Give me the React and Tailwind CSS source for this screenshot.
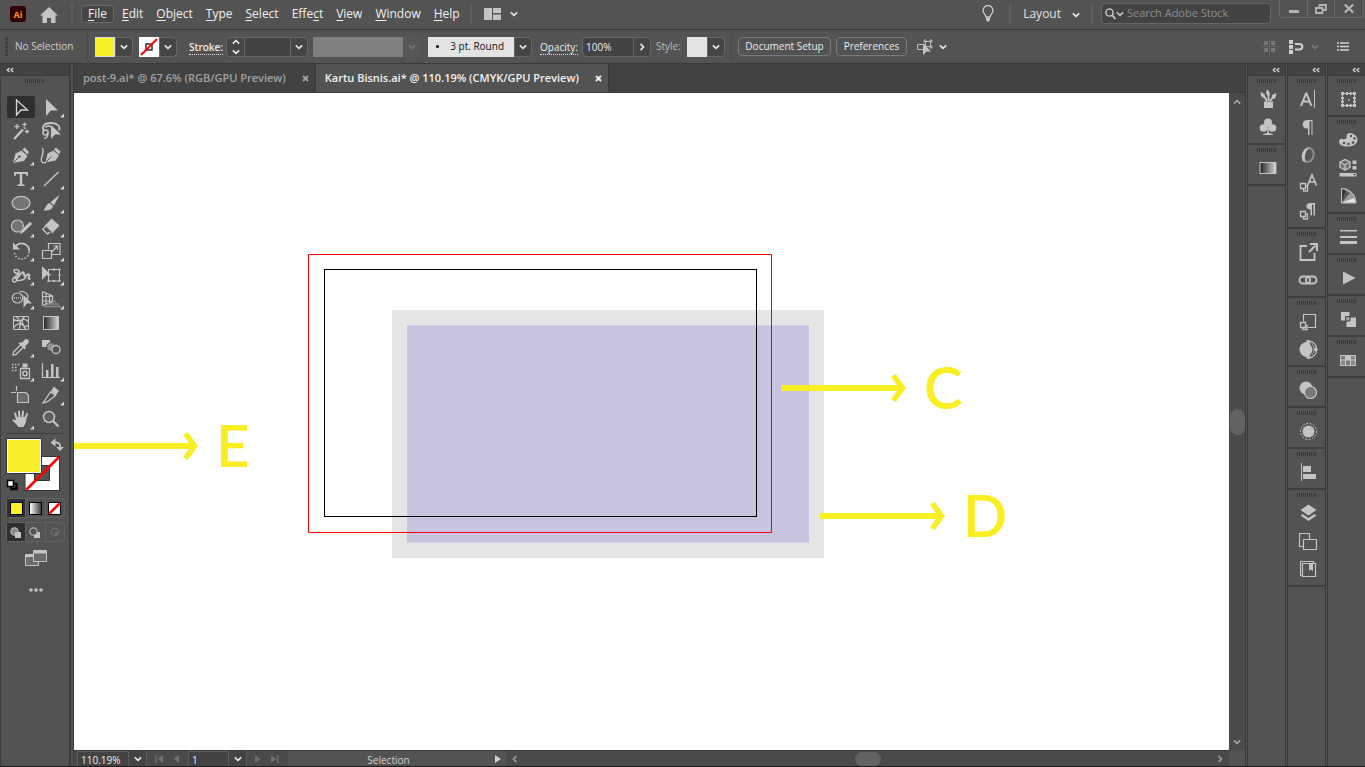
const MENUS = [
  ['', 'F', 'ile'],
  ['', 'E', 'dit'],
  ['', 'O', 'bject'],
  ['', 'T', 'ype'],
  ['', 'S', 'elect'],
  ['Effe', 'c', 't'],
  ['', 'V', 'iew'],
  ['', 'W', 'indow'],
  ['', 'H', 'elp'],
]

const TABS = [
  { title: 'post-9.ai* @ 67.6% (RGB/GPU Preview)', active: false },
  { title: 'Kartu Bisnis.ai* @ 110.19% (CMYK/GPU Preview)', active: true },
]

const C = '#c4c4c4'

// Every tool icon is drawn in a 30x24 cell
const TOOLS = [
  { name: 'Selection', icon: <path d="M10.5 5v15l4.5-5h6.500z" fill="none" stroke="#d6d6d6" strokeWidth="1.3" />, plain: true },
  { name: 'Direct Selection', icon: <path d="M10 4v17l5-5.500h7z" fill={C} /> },
  {
    name: 'Magic Wand',
    icon: (
      <>
        <path d="M8 20l9-9.500" stroke={C} strokeWidth="2.4" />
        <path d="M11 5v5M8.500 7.500h5M18.500 3.500v4M16.500 5.500h4M21 10.500v4M19 12.500h4" stroke={C} strokeWidth="1.3" />
        <path d="M18 9.500l1-1" stroke={C} strokeWidth="2" />
      </>
    ),
    plain: true,
  },
  {
    name: 'Lasso',
    icon: (
      <>
        <path d="M8 12c-3-5 1-8 7-8s10 3 8 7.500" fill="none" stroke={C} strokeWidth="1.8" />
        <circle cx="9.500" cy="13.500" r="2.500" fill="none" stroke={C} strokeWidth="1.6" />
        <path d="M12 14c0 3-1 5-4 5.500M9 8.500c2-2 5-2 6-.5" fill="none" stroke={C} strokeWidth="1.5" />
        <path d="M15 6v14l4-4.500h6z" fill={C} />
      </>
    ),
    plain: true,
  },
  {
    name: 'Pen',
    icon: (
      <>
        <path d="M7 20l2.500-9.500 6-3 6 5.500-3.500 5z" fill={C} />
        <path d="M16.500 6.500l2-2 4.500 4.500-1.500 2.500z" fill={C} />
        <path d="M7.500 19.500l5.500-5.500" stroke="#535353" />
        <circle cx="13.500" cy="13.500" r="1.200" fill="#535353" />
      </>
    ),
  },
  {
    name: 'Curvature',
    icon: (
      <>
        <path d="M9.500 19.500l2-9 6-3 5.500 5-3.500 5z" fill={C} />
        <path d="M18 6.500l2-2 4.500 4-1.500 3z" fill={C} />
        <path d="M6 5c4 3-3 11 0 14 1 1 3 1 4 0" fill="none" stroke={C} strokeWidth="1.4" />
        <path d="M10 19l5.500-5.500" stroke="#535353" />
      </>
    ),
    plain: true,
  },
  { name: 'Type', icon: <path d="M8 5h14v4h-1.500l-.5-2h-3.800v10.200l2.300.4V19h-7v-1.400l2.300-.4V7H10l-.5 2H8z" fill={C} /> },
  { name: 'Line Segment', icon: <path d="M8 19L22.500 5" stroke={C} strokeWidth="1.400" /> },
  { name: 'Ellipse', icon: <ellipse cx="15" cy="12" rx="9" ry="6.700" fill="#747474" stroke={C} strokeWidth="1.200" /> },
  {
    name: 'Paintbrush',
    icon: (
      <>
        <path d="M23.500 4L15 11.500l2.500 2.500z" fill={C} />
        <path d="M23.500 4l-5.500 10.200-3.500-3z" fill={C} />
        <path d="M13.500 12l3.500 3c-1 4-5 5-10 4.500 3-1.500 2.500-6.500 6.500-7.500z" fill={C} />
      </>
    ),
  },
  {
    name: 'Shaper',
    icon: (
      <>
        <circle cx="11.500" cy="11" r="6" fill="#747474" stroke={C} strokeWidth="1.200" />
        <path d="M13.500 19.500l1-4L24 6.500l2.500 2.500-9.500 9z" fill={C} stroke="#535353" strokeWidth=".6" />
      </>
    ),
  },
  {
    name: 'Eraser',
    icon: (
      <>
        <path d="M15.500 3.500l8 7-7.500 8-8-7z" fill={C} />
        <path d="M10.500 10.500L6.800 14.500l4.700 4.500 4.500-4" fill="none" stroke={C} strokeWidth="1.300" />
        <path d="M9.500 12l6 5.500" stroke="#535353" strokeWidth="1.200" />
      </>
    ),
  },
  {
    name: 'Rotate',
    icon: (
      <>
        <path d="M9.500 8a7.300 7.300 0 0 1 13.500 4.500" fill="none" stroke={C} strokeWidth="1.800" />
        <path d="M23 13a7.300 7.300 0 0 1-14.500 1" fill="none" stroke={C} strokeWidth="1.600" strokeDasharray="1.500 1.800" />
        <path d="M7 3.500v7h7z" fill={C} />
      </>
    ),
  },
  {
    name: 'Scale',
    icon: (
      <>
        <path d="M12.500 10.500v-6h11.500v11h-8M6.500 11.500h9v8h-9z" fill="none" stroke={C} strokeWidth="1.200" />
        <path d="M16 12.500l5-5M17.500 7h4v4" fill="none" stroke={C} strokeWidth="1.200" />
      </>
    ),
  },
  {
    name: 'Width',
    icon: (
      <>
        <path d="M7 17c2-5 7-5 6-9-1-2-5-2-5 0s3 3 5 1.500" fill="none" stroke={C} strokeWidth="1.700" />
        <path d="M9 17l4-4c3-4 5-5 5-2s1 3 3 1 3 0 2 2c-1 1-1 2 1.500 2" fill="none" stroke={C} strokeWidth="2" />
        <path d="M9 17c4 1 8 1 11-3" fill="none" stroke={C} strokeWidth="1.500" />
        <circle cx="8.500" cy="17" r="2" fill="#535353" stroke={C} strokeWidth="1.300" />
      </>
    ),
  },
  {
    name: 'Free Transform',
    icon: (
      <>
        <rect x="12.500" y="6.500" width="11" height="11.500" fill="none" stroke={C} />
        <path d="M6 3v14l4-4.500h5.500z" fill={C} />
        <path d="M11.500 17h2v2h-2zM22.500 5.500h2v2h-2zM22.500 17h2v2h-2zM17 5.500h2v2h-2zM17 17h2v2h-2zM22.500 11h2v2h-2z" fill={C} />
      </>
    ),
  },
  {
    name: 'Shape Builder',
    icon: (
      <>
        <ellipse cx="11.500" cy="11" rx="5.300" ry="5" fill="none" stroke={C} strokeWidth="1.200" />
        <path d="M13 5c6-2 11 3 8 7.500" fill="none" stroke={C} strokeWidth="1.200" />
        <path d="M8 11h10" stroke={C} strokeWidth="1.500" strokeDasharray="1 1" />
        <path d="M17.500 8v13l3.500-4.500h5z" fill={C} />
      </>
    ),
  },
  {
    name: 'Perspective Grid',
    icon: (
      <>
        <path d="M6.500 4.500v14M6.500 4.500l10 4.500v6l-10 3.500M10 6v11.500M13.500 7.500v8.500M6.500 9.500h10M6.500 14h10" fill="none" stroke={C} strokeWidth="1.200" />
        <path d="M16 14.500h4M12 17h11M8 19.500h17" stroke="#8c8c8c" strokeWidth="1.300" />
      </>
    ),
  },
  {
    name: 'Mesh',
    icon: (
      <>
        <path d="M7.500 5.500h15v13h-15z" fill="none" stroke={C} />
        <path d="M7.500 9c3 0 6 2 8 0s4-1 7 2M7.500 17c3-5 7-5 9-3s4 2 6 0M10 5.500c5 3 5 8 3 13M18.500 5.500c-5 4-1 9 1 13" fill="none" stroke={C} strokeWidth="1.400" />
      </>
    ),
    plain: true,
  },
  { name: 'Gradient', icon: <rect x="7.500" y="5.500" width="15" height="13" fill="url(#gray-ramp)" stroke={C} />, plain: true },
  {
    name: 'Eyedropper',
    icon: (
      <>
        <path d="M14 10.500l-6.500 6.500-.5 3 3-.5 6.500-6.500" fill="none" stroke={C} strokeWidth="1.400" />
        <path d="M12.500 8.500l1.500-1.500 1.500 1 3.500-3.500c2-1.500 5 1.500 3.500 3.500L19 11.500l1 1.500-1.500 1.500z" fill={C} />
      </>
    ),
  },
  {
    name: 'Blend',
    icon: (
      <>
        <path d="M6 5h8v7H6z" fill={C} />
        <circle cx="15" cy="12" r="4.300" fill="#909090" stroke="#535353" />
        <circle cx="20" cy="14.500" r="4" fill="#535353" stroke={C} strokeWidth="1.300" />
      </>
    ),
    plain: true,
  },
  {
    name: 'Symbol Sprayer',
    icon: (
      <>
        <path d="M14.500 9.500h9v10h-9z" fill="none" stroke={C} strokeWidth="1.300" />
        <path d="M16.500 4.500h5v4h-5z" fill={C} />
        <circle cx="19" cy="14.500" r="2.200" fill="none" stroke={C} strokeWidth="1.500" />
        <path d="M6 5.500h8M6 8.500h6M6 11.500h5" stroke={C} strokeWidth="1.500" strokeDasharray="1.500 1.500" />
      </>
    ),
  },
  {
    name: 'Column Graph',
    icon: (
      <>
        <path d="M6.500 4v14.500H24" fill="none" stroke={C} strokeWidth="1.200" />
        <path d="M10 11h2.500v7H10zM15 5h2.500v13H15zM20 8h2.500v10H20z" fill={C} />
      </>
    ),
  },
  {
    name: 'Artboard',
    icon: (
      <>
        <path d="M11.500 9.500h8.500l2.500 3v7H11.500z" fill="#6a6a6a" stroke={C} strokeWidth="1.200" />
        <path d="M10.500 3v5M5 9.500h5" stroke={C} strokeWidth="1.200" />
      </>
    ),
    plain: true,
  },
  {
    name: 'Slice',
    icon: (
      <>
        <path d="M7 20l7.500-11 5 3.500L11 19z" fill="none" stroke={C} strokeWidth="1.300" />
        <path d="M15 8l3-4.500 5 4.500-3.500 4.500z" fill={C} />
      </>
    ),
  },
  {
    name: 'Hand',
    icon: (
      <>
        <path d="M10.500 11L9 6.500M13.500 10l-.5-5.500M16.500 10l.5-5.500M19.500 11l1.500-4" stroke={C} strokeWidth="2" strokeLinecap="round" />
        <path d="M9.500 10h11l-.5 5-2.500 5h-5l-2.500-3-3.500-3.500c0-1.500 2-1.500 3.500 0z" fill={C} />
      </>
    ),
  },
  {
    name: 'Zoom',
    icon: (
      <>
        <circle cx="13" cy="10" r="5.500" fill="#606060" stroke={C} strokeWidth="1.500" />
        <path d="M17 14l5.500 5.500" stroke={C} strokeWidth="2.400" />
      </>
    ),
    plain: true,
  },
]

// Dock icons use a 20x20 box
const DI = {
  brushes: (
    <>
      <path d="M6 12.500h9V19H6z" fill={C} />
      <path d="M9 12L5.500 6M10.500 12V4M12 12l4-5" stroke={C} strokeWidth="1.800" />
      <path d="M9 0l3 4-1.500 4L8 4.500zM2.500 3l4 2 .5 5-4-3zM18.500 4l-1 5-4 1.500L14 6z" fill={C} />
    </>
  ),
  club: (
    <>
      <circle cx="10" cy="5.500" r="4" fill={C} />
      <circle cx="5.500" cy="11" r="3.800" fill={C} />
      <circle cx="14.500" cy="11" r="3.800" fill={C} />
      <path d="M9.200 8h1.600v8l4 1v1H5.200v-1l4-1z" fill={C} />
    </>
  ),
  gradient: <rect x="2" y="4.500" width="16" height="11" fill="url(#gray-ramp)" stroke={C} />,
  character: (
    <>
      <path d="M3 17L8 4.500h.500L13.500 17M5 12.500h6.500" fill="none" stroke={C} strokeWidth="2" />
      <path d="M16.500 1v18" stroke={C} />
    </>
  ),
  paragraph: (
    <path d="M14.500 3v15h-1V4.200h-2V18h-1.500v-6.500c-7 1-7-8.500-.5-8.500z" fill={C} />
  ),
  opentype: (
    <>
      <ellipse cx="10.500" cy="10" rx="5" ry="7" transform="rotate(14 10.500 10)" fill="none" stroke="#8e8e8e" strokeWidth="2" />
      <path d="M11.500 2.500C5.500 2.500 3 9 4 14c.5 2 2 3.500 4 3.500-3-3-.5-12.500 3.500-15z" fill={C} />
    </>
  ),
  charStyles: (
    <>
      <path d="M9.500 12.500L14 2l4.500 10.500M11 9h6" fill="none" stroke={C} strokeWidth="1.700" />
      <path d="M2.500 10.500h5v5h-5zM5.500 15.500v2.500h4v-5h-2" fill="none" stroke={C} strokeWidth="1.300" />
    </>
  ),
  parStyles: (
    <>
      <path d="M17 2v12.500h-1.500V3.500h-1.500v11h-1.500V8.500c-5.500 0-5.500-6.500 0-6.500z" fill={C} />
      <path d="M2.500 10.500h5v5h-5zM5.500 15.500v2.500h4v-5h-2" fill="none" stroke={C} strokeWidth="1.300" />
    </>
  ),
  exportIcon: (
    <>
      <path d="M9 4H2.500v14h14v-7" fill="none" stroke={C} strokeWidth="1.800" />
      <path d="M11 10l6.500-6.500M12 2h7v7" fill="none" stroke={C} strokeWidth="2" />
    </>
  ),
  links: (
    <>
      <rect x="1.500" y="6.500" width="10.500" height="7" rx="3.500" fill="none" stroke={C} strokeWidth="1.900" />
      <rect x="8" y="6.500" width="10.500" height="7" rx="3.500" fill="none" stroke={C} strokeWidth="1.900" />
    </>
  ),
  transform: (
    <>
      <path d="M5.500 10V3.500h12v13H10" fill="none" stroke={C} strokeWidth="1.200" />
      <path d="M2.500 11.500h5v5h-5zM5 16.500v2h4v-4H7.500" fill="none" stroke={C} strokeWidth="1.300" />
    </>
  ),
  recolor: (
    <>
      <circle cx="9" cy="10.500" r="7.500" fill={C} />
      <path d="M10.500 2c5 .5 8 4 8 8.500s-3 8-8 8.500" fill="none" stroke={C} strokeWidth="1.300" />
      <path d="M12 4.500c4 3 4 9 0 12" fill="none" stroke="#535353" strokeWidth="1.200" />
      <circle cx="10" cy="2.500" r="1.700" fill={C} />
      <circle cx="10" cy="18.500" r="1.500" fill={C} />
      <circle cx="18" cy="10.500" r="1.700" fill={C} />
    </>
  ),
  transparency: (
    <>
      <circle cx="8" cy="8" r="6.500" fill={C} />
      <circle cx="12.500" cy="12.500" r="6" fill="#777" stroke={C} strokeWidth="1.200" />
    </>
  ),
  appearance: (
    <>
      <circle cx="10.500" cy="10.500" r="6" fill={C} />
      <circle cx="10.500" cy="10.500" r="8" fill="none" stroke={C} strokeDasharray="2 1.500" />
    </>
  ),
  align: <path d="M3 1h1v18H3zM5 4h8v6H5zM5 12h13v5H5z" fill={C} />,
  layers: (
    <path d="M10.500 1.500l8 5.500-8 5.500L2.500 7zM2.500 12.500l2-1.500 6 4 6-4 2 1.500-8 5.500z" fill={C} />
  ),
  asset: <path d="M5.500 15.500h-4v-13h10v6M5.500 8.500h13v10h-13z" fill="none" stroke={C} strokeWidth="1.200" />,
  library: (
    <>
      <path d="M4 16.500H2.500v-14h13V4M4.500 4.500h13v13h-13z" fill="none" stroke={C} strokeWidth="1.200" />
      <path d="M11 5h4v7l-2-1.500-2 1.500z" fill={C} />
    </>
  ),
  artboards: (
    <>
      <path d="M4.500 4.500h12v12h-12z" fill="none" stroke={C} />
      <path d="M3 3h3v3H3zM8 3h2v3H8zM11.500 3h2v3h-2zM15 3h3v3h-3zM3 15h3v3H3zM15 15h3v3h-3zM8 15h2v3H8zM11.500 15h2v3h-2zM3 8h3v2H3zM3 11.500h3v2H3zM15 8h3v2h-3zM15 11.500h3v2h-3zM10 10h1.500v1.500H10z" fill={C} />
    </>
  ),
  palette: (
    <>
      <path d="M12 3c4 .5 7.500 3 7.500 7 0 4-4.500 6.500-10 6.500-5 0-8.500-1.500-8.500-5 0-2 2-3.500 4-2.500 2 1 4-.5 3.500-2-.5-2 1-4 3.500-4z" fill={C} />
      <circle cx="6" cy="13" r="1.300" fill="#535353" />
      <circle cx="10.500" cy="14" r="1.300" fill="#535353" />
      <circle cx="15" cy="12.500" r="1.300" fill="#535353" />
      <circle cx="16.500" cy="8.500" r="1.200" fill="#535353" />
      <circle cx="13" cy="6" r="1.200" fill="#535353" />
    </>
  ),
  cube: (
    <>
      <path d="M2 4l5-2.500L12 4v5.500L7 12l-5-2.500zM2 4l5 2.500L12 4M7 6.500V12" fill="#777" stroke={C} strokeWidth="1.200" />
      <path d="M14.500 2.500h4v3.500h-4zM14.500 8h4v3.500h-4zM1.500 15h17v3.500h-17z" fill={C} />
      <path d="M15 16h3l-1.500 1.500z" fill="#333" />
    </>
  ),
  guide: (
    <>
      <path d="M3.500 2.500v14.500h14.500c0-8-6-14.500-14.500-14.500z" fill="#999" stroke={C} />
      <path d="M4 16.500V3l4 1.500z" fill="#333" />
      <path d="M4 16.500L8 4.500l3.500 2.500z" fill="#555" />
      <path d="M4 16.500L16 12l1.500 4.500z" fill="#e2e2e2" />
    </>
  ),
  stroke: <path d="M2 3h17v1.500H2zM2 9h17v2H2zM2 14h17v3H2z" fill={C} />,
  play: <path d="M5 3.500v13L17.500 10z" fill={C} />,
  pathfinder: (
    <>
      <path d="M3 3h8.500v8.500H3zM8.500 8.500H18V18H8.500z" fill={C} />
      <path d="M7.500 7.500h4.500v4.500H7.500z" fill="#a0a0a0" stroke="#444" />
    </>
  ),
  swatches: (
    <>
      <path d="M2 5h16v11H2z" fill={C} />
      <path d="M3 6h4v3.500H3zM8 10.500h4V15H8z" fill="#7a7a7a" />
      <path d="M13 6h4v3.500h-4zM3 10.500h4V15H3zM13 10.500h4V15h-4z" fill="#8a8a8a" />
    </>
  ),
}

const DOCKS = [
  [['brushes', 'club'], ['gradient']],
  [
    ['character', 'paragraph', 'opentype', 'charStyles', 'parStyles'],
    ['exportIcon', 'links'],
    ['transform', 'recolor'],
    ['transparency'],
    ['appearance'],
    ['align'],
    ['layers', 'asset', 'library'],
  ],
  [['artboards'], ['palette', 'cube', 'guide'], ['stroke'], ['play'], ['pathfinder'], ['swatches']],
]

function Chevron({ dir = 'down', className = 'text-[#e6e6e6]' }) {
  const d = {
    down: 'M1.800 3.300l3.200 3L8.200 3.300',
    up: 'M1.800 6.700L5 3.700l3.200 3',
    left: 'M6.500 1.800L3.500 5l3 3.200',
    right: 'M3.500 1.800L6.500 5l-3 3.200',
  }[dir]
  return (
    <svg width="10" height="10" viewBox="0 0 10 10" className={`shrink-0 ${className}`} aria-hidden="true">
      <path d={d} fill="none" stroke="currentColor" strokeWidth="1.700" />
    </svg>
  )
}

function DropButton({ label, dir }) {
  return (
    <button
      type="button"
      aria-label={label}
      className="flex h-5 w-[18px] items-center justify-center rounded-r-sm border border-[#666] bg-[#454545]"
    >
      <Chevron dir={dir} />
    </button>
  )
}

function Grip() {
  return (
    <svg width="20" height="4" className="mx-auto block" aria-hidden="true">
      <path d="M0 2h20" stroke="#383838" strokeWidth="4" strokeDasharray="1 1" />
    </svg>
  )
}

function Collapse() {
  return (
    <svg width="8" height="6" viewBox="0 0 8 6" aria-hidden="true">
      <path d="M3.500 1L1.300 3l2.200 2M7.200 1L5 3l2.200 2" fill="none" stroke="#d4d4d4" strokeWidth="1.400" />
    </svg>
  )
}

function Divider({ className }) {
  return <span className={`w-[2px] shrink-0 bg-[#5e5e5e] ${className}`} />
}

function MenuBar() {
  return (
    <header className="flex h-[30px] shrink-0 items-start justify-between border-b border-[#3a3a3a]">
      <div className="flex h-[27px] items-center">
        <svg width="16" height="16" viewBox="0 0 16 16" className="ml-[10px]" aria-hidden="true">
          <rect width="16" height="16" rx="3" fill="#330000" />
          <text x="8" y="11.500" textAnchor="middle" fill="#ff9a00" fontSize="9" fontWeight="700" fontFamily="Open Sans, sans-serif">
            Ai
          </text>
        </svg>
        <button type="button" aria-label="Home" className="ml-[14px]">
          <svg width="18" height="16" viewBox="0 0 18 16" className="mt-[2px] block">
            <path d="M9 0l9 8.500h-2.500V16H11v-5H7v5H2.500V8.500H0z" fill="#c4c4c4" />
          </svg>
        </button>
        <Divider className="ml-[13px] h-5" />
        <nav className="ml-2 flex items-center text-xs text-[#f0f0f0]">
          {MENUS.map(([pre, key, post], i) => (
            <button
              key={pre + key + post}
              type="button"
              className={
                i === 0
                  ? 'mr-px h-[18px] rounded-sm border border-[#6a6a6a] bg-[#454545] px-[6px] leading-4'
                  : 'h-[18px] pr-[6px] pl-[7px] leading-4'
              }
            >
              {pre}
              <span className="underline underline-offset-2">{key}</span>
              {post}
            </button>
          ))}
        </nav>
        <Divider className="ml-1 h-5" />
        <button type="button" aria-label="Arrange documents" className="ml-3 flex items-center gap-[7px]">
          <svg width="18" height="12" viewBox="0 0 18 12">
            <path d="M0 0h8v12H0zM9 0h8v5H9zM9 6.500h8V12H9z" fill="#c4c4c4" />
          </svg>
          <Chevron />
        </button>
      </div>

      <div className="flex items-start">
        <div className="flex h-[27px] items-center">
          <button type="button" aria-label="Learn">
            <svg width="12" height="17" viewBox="0 0 12 17" className="block">
              <path d="M4 12c0-2.500-3-3.500-3-6.500a5 5 0 0 1 10 0c0 3-3 4-3 6.500z" fill="none" stroke="#c9c9c9" strokeWidth="1.300" />
              <path d="M4 12.500h4v2L7 16.500H5l-1-2z" fill="#c9c9c9" />
            </svg>
          </button>
          <Divider className="ml-[15px] h-5" />
          <button type="button" className="ml-3 flex items-center gap-[10px] text-xs text-[#e2e2e2]">
            Layout
            <Chevron className="mt-[2px] text-[#e6e6e6]" />
          </button>
          <Divider className="ml-[10px] h-5" />
          <label className="ml-2 flex h-[21px] w-[170px] items-center rounded-sm border border-[#666] bg-[#434343] pl-[3px]">
            <svg width="11" height="12" viewBox="0 0 11 12" aria-hidden="true">
              <circle cx="4.500" cy="4.500" r="3.600" fill="none" stroke="#d0d0d0" strokeWidth="1.400" />
              <path d="M7 7l3.500 4" stroke="#d0d0d0" strokeWidth="1.800" />
            </svg>
            <Chevron className="-ml-px text-[#c4c4c4]" />
            <input
              aria-label="Search Adobe Stock"
              placeholder="Search Adobe Stock"
              className="min-w-0 flex-1 pl-[2px] text-[11px] outline-none placeholder:text-[#8c8c8c]"
            />
          </label>
        </div>
        <div className="mr-px ml-2 flex h-[18px] rounded-b-sm border border-t-0 border-[#6a6a6a]">
          <button type="button" aria-label="Minimize" className="flex w-[27px] justify-center pt-[10px]">
            <span className="h-[3px] w-[10px] bg-[#b4b4b4]" />
          </button>
          <button type="button" aria-label="Restore" className="flex w-7 justify-center border-x border-[#6a6a6a] pt-1">
            <svg width="12" height="10" viewBox="0 0 12 10">
              <path d="M4.500 3V1h6.500v5H8.500M1 4h6.500v5H1z" fill="none" stroke="#b4b4b4" strokeWidth="1.800" />
            </svg>
          </button>
          <button type="button" aria-label="Close" className="flex w-7 justify-center pt-1">
            <svg width="10" height="9" viewBox="0 0 10 9">
              <path d="M.8 .5l8.400 8M9.200 .5L.8 8.500" stroke="#b4b4b4" strokeWidth="2.200" />
            </svg>
          </button>
        </div>
      </div>
    </header>
  )
}

function ControlBar() {
  return (
    <div className="flex h-[34px] shrink-0 items-center border-b border-[#3a3a3a] text-[10px] font-medium text-[#ededed]">
      <svg width="3" height="20" className="ml-[5px]" aria-hidden="true">
        <path d="M1.500 0v20" stroke="#383838" strokeWidth="3" strokeDasharray="1 1" />
      </svg>
      <span className="ml-[7px] w-[72px] text-[#cfcfcf]">No Selection</span>
      <span className="h-[26px] w-px bg-[#484848]" />
      <button type="button" aria-label="Fill" className="ml-[7px] h-5 w-5 border border-[#ddd] bg-[#faf02a]" />
      <DropButton label="Fill options" />
      <button type="button" aria-label="Stroke color" className="ml-[6px] h-5 w-5 bg-white">
        <svg width="20" height="20" viewBox="0 0 20 20">
          <rect x="7" y="7" width="6" height="6" fill="none" stroke="#222" strokeWidth="1.400" />
          <path d="M2 18L18 2" stroke="#f00" strokeWidth="2" />
        </svg>
      </button>
      <DropButton label="Stroke color options" />
      <label htmlFor="weight" className="ml-3 w-8 shrink-0 leading-3">
        <span className="border-b border-dotted border-[#ddd] font-semibold">Stroke:</span>
      </label>
      <button
        type="button"
        aria-label="Step"
        className="ml-[5px] flex h-5 w-[19px] flex-col items-center justify-center rounded-l-sm border border-[#666] bg-[#454545]"
      >
        <Chevron dir="up" />
        <Chevron />
      </button>
      <input id="weight" className="h-5 w-[45px] border-y border-[#666] bg-[#434343]" />
      <DropButton label="Weight options" />
      <span className="ml-[5px] h-5 w-[90px] shrink-0 bg-[#808080]" />
      <span className="flex h-5 w-[18px] shrink-0 items-center justify-center bg-[#575757]">
        <Chevron className="text-[#737373]" />
      </span>
      <button
        type="button"
        className="ml-[7px] flex h-5 w-[86px] shrink-0 items-center justify-between bg-[#e3e3e3] pr-[10px] pl-2 text-[#111]"
      >
        <span className="h-[3px] w-[3px] rounded-full bg-black" />
        3 pt. Round
      </button>
      <DropButton label="Brush options" />
      <label htmlFor="opacity" className="ml-2 w-[37px] shrink-0 leading-3">
        <span className="border-b border-dotted border-[#ddd]">Opacity:</span>
      </label>
      <input id="opacity" defaultValue="100%" className="ml-[5px] h-5 w-[51px] rounded-l-sm border border-r-0 border-[#666] bg-[#434343] pl-[3px]" />
      <DropButton label="Opacity slider" dir="right" />
      <span className="ml-[5px] w-[31px] text-[#bdbdbd]">Style:</span>
      <button type="button" aria-label="Graphic style" className="h-5 w-5 bg-[#e3e3e3]" />
      <DropButton label="Style options" />
      <span className="ml-[6px] h-[26px] w-px bg-[#484848]" />
      <button type="button" className="ml-[6px] h-[19px] w-[93px] shrink-0 rounded-sm border border-[#7a7a7a]">
        Document Setup
      </button>
      <button type="button" className="ml-[5px] h-[19px] w-[71px] shrink-0 rounded-sm border border-[#7a7a7a]">
        Preferences
      </button>
      <button type="button" aria-label="Select similar" className="ml-[9px] flex shrink-0 items-center gap-[5px]">
        <svg width="17" height="16" viewBox="0 0 17 16">
          <path d="M9.500 2.500h5v5h-5zM7 5.500H1.500v5H7M8 1h2v2H8zM14 1h2v2h-2zM14 7h2v2h-2z" fill="none" stroke="#bbb" />
          <path d="M7 4v12l3.500-3.500H15z" fill="#c4c4c4" />
        </svg>
        <Chevron />
      </button>
      <div className="ml-auto flex items-center pr-4">
        <svg width="15" height="14" viewBox="0 0 15 14" aria-hidden="true">
          <path d="M2 1h4v4H2zM9 1h4v4H9zM2 8h4v4H2zM9 8h4v4H9z" fill="#777" />
          <path d="M7.500 0v14M0 6.500h15" stroke="#666" />
        </svg>
        <svg width="15" height="14" viewBox="0 0 15 14" className="ml-3" aria-hidden="true">
          <path d="M0 0h4v4H0zM0 5h4v4H0zM0 10h4v4H0z" fill="#cfcfcf" />
          <path d="M6 4h4c4.500 0 4.500 5.500 0 5.500H6" fill="none" stroke="#cfcfcf" strokeWidth="2" />
        </svg>
        <Chevron className="ml-[6px] text-[#7a7a7a]" />
        <button type="button" aria-label="Panel menu" className="ml-[17px]">
          <svg width="12" height="9" viewBox="0 0 12 9">
            <path d="M0 1h2M3 1h9M0 4.500h2M3 4.500h9M0 8h2M3 8h9" stroke="#d4d4d4" strokeWidth="1.300" />
          </svg>
        </button>
      </div>
    </div>
  )
}

function ColorControls() {
  const cell = 'flex h-[18px] flex-1 items-center justify-center'
  return (
    <div className="mx-[5px] border-t border-[#424242]">
      <svg width="60" height="56" viewBox="0 0 60 56" className="mt-1 block" aria-hidden="true">
        <path d="M19 18.500h34.500v34H19z" fill="#fff" stroke="#333" />
        <path d="M28.500 27.500h15v15h-15z" fill="#535353" stroke="#333" />
        <path d="M20 52L53 19" stroke="#f00" strokeWidth="2.500" />
        <path d="M.5 .5h35v35H.5z" fill="#faf02a" stroke="#333" />
        <path d="M1.500 1.500h33v33h-33z" fill="none" stroke="#fff" />
        <path d="M48 4.500c5-.5 6.500 1 6 5.500" fill="none" stroke="#c4c4c4" strokeWidth="1.800" />
        <path d="M44.500 4.500l5-4v8zM50 9h8l-4 4z" fill="#c4c4c4" />
        <path d="M5.500 46h5v5h-5z" fill="#535353" stroke="#000" strokeWidth="2.500" />
        <path d="M1.500 42.500h6v6h-6z" fill="#fff" stroke="#000" strokeWidth="1.500" />
      </svg>
      <div className="mt-1 flex w-[59px] rounded-sm border border-[#626262]">
        <button type="button" aria-label="Color" className={`${cell} bg-[#2f2f2f]`}>
          <span className="h-[13px] w-[13px] border border-black bg-[#faf02a]" />
        </button>
        <button type="button" aria-label="Gradient fill" className={`${cell} border-x border-[#626262]`}>
          <span className="h-[13px] w-[13px] border border-black bg-linear-to-r from-white to-[#444]" />
        </button>
        <button type="button" aria-label="None" className={cell}>
          <svg width="13" height="13" viewBox="0 0 13 13">
            <path d="M.5 .5h12v12H.5z" fill="#fff" stroke="#000" />
            <path d="M1.500 11.500l10-10" stroke="#f00" strokeWidth="2.500" />
          </svg>
        </button>
      </div>
      <div className="mt-1 flex w-[59px] rounded-sm border border-[#626262]">
        <button type="button" aria-label="Draw normal" className={`${cell} bg-[#2f2f2f]`}>
          <DrawMode />
        </button>
        <button type="button" aria-label="Draw behind" className={`${cell} border-x border-[#626262]`}>
          <DrawMode behind />
        </button>
        <button type="button" aria-label="Draw inside" className={cell}>
          <svg width="10" height="10" viewBox="0 0 10 10">
            <circle cx="5" cy="5" r="3.800" fill="none" stroke="#6e6e6e" strokeWidth="1.200" />
            <path d="M5 5h3v2L6 8.500H5z" fill="#6e6e6e" />
          </svg>
        </button>
      </div>
      <button type="button" aria-label="Screen mode" className="mt-2 ml-[19px] block">
        <svg width="22" height="16" viewBox="0 0 22 16">
          <path d="M.5 4.500h13v11H.5z" fill="#6c6c6c" stroke="#c4c4c4" />
          <path d="M.5 4h13v3H.5z" fill="#c4c4c4" />
          <path d="M8.500 .5h13v11h-13z" fill="#6c6c6c" stroke="#c4c4c4" />
          <path d="M8.500 .5h13v3h-13z" fill="#c4c4c4" />
        </svg>
      </button>
      <button type="button" aria-label="Edit toolbar" className="mt-[22px] ml-[23px] block">
        <svg width="14" height="4" viewBox="0 0 14 4">
          <path d="M2 2h.01M7 2h.01M12 2h.01" stroke="#c4c4c4" strokeWidth="3.600" strokeLinecap="round" />
        </svg>
      </button>
    </div>
  )
}

function DrawMode({ behind }) {
  return (
    <svg width="12" height="11" viewBox="0 0 12 11">
      {behind && <path d="M5 5h6v6H5z" fill="#c4c4c4" />}
      <circle cx="4.500" cy="4.500" r="3.700" fill={behind ? '#535353' : '#888'} stroke="#b4b4b4" strokeWidth="1.200" />
      {!behind && <path d="M5 5h6v6H5z" fill="#c4c4c4" />}
    </svg>
  )
}

function Toolbar() {
  return (
    <aside className="mr-[2px] flex w-[71px] shrink-0 flex-col border-r-2 border-l border-[#3d3d3d]">
      <button type="button" aria-label="Collapse tools" className="flex h-3 items-center border-b border-[#3a3a3a] bg-[#424242] pl-[5px]">
        <Collapse />
      </button>
      <div className="pt-[3px]">
        <Grip />
      </div>
      <div className="mt-3 ml-[5px] grid w-[60px] grid-cols-2">
        {TOOLS.map((tool, i) => (
          <button key={tool.name} type="button" aria-label={tool.name} className="flex h-6 items-center justify-center">
            <svg width="30" height="24" viewBox="0 0 30 24">
              {i === 0 && <rect x="1" y="1" width="28" height="22" rx="2" fill="#2f2f2f" />}
              {tool.icon}
              {!tool.plain && <path d="M28 18.500v4h-4z" fill="#d4d4d4" />}
            </svg>
          </button>
        ))}
      </div>
      <div className="h-[2px]" />
      <ColorControls />
    </aside>
  )
}

function Tabs() {
  return (
    <div role="tablist" className="flex h-[29px] shrink-0 border-b border-[#3a3a3a] bg-[#424242] text-[11px] font-semibold">
      {TABS.map((tab) => (
        <div
          key={tab.title}
          className={
            tab.active
              ? 'flex items-center border-r border-[#3a3a3a] bg-[#535353] text-[#f2f2f2]'
              : 'flex items-center border-r border-[#3a3a3a] text-[#a2a2a2]'
          }
        >
          <button type="button" role="tab" aria-selected={tab.active} className="pl-[9px] whitespace-nowrap">
            {tab.title}
          </button>
          <button type="button" aria-label="Close tab" className="mr-[6px] ml-4">
            <svg width="7" height="7" viewBox="0 0 7 7">
              <path d="M1 1l5 5M6 1L1 6" stroke="currentColor" strokeWidth="1.800" />
            </svg>
          </button>
        </div>
      ))}
    </div>
  )
}

function Arrow({ x, y, label }) {
  return (
    <g transform={`translate(${x} ${y})`}>
      <path d="M0 0h121" stroke="#f8ee22" strokeWidth="6" />
      <path d="M112.500 -12.500L121.500 0l-9 12.500" fill="none" stroke="#f8ee22" strokeWidth="5.500" />
      <text x="143" y="21" fill="#f8ee22" fontSize="58" fontWeight="600" fontFamily="Lato, sans-serif">
        {label}
      </text>
    </g>
  )
}

function Artboard() {
  return (
    <svg className="block h-full w-full bg-white">
      <rect x="318" y="217" width="432" height="248" fill="#e4e6e5" />
      <rect x="333" y="232.500" width="402" height="217" fill="#c8c4e0" />
      <path d="M697.500 161.500h-463v278h463z" fill="none" stroke="#f00" />
      <rect x="250.500" y="176.500" width="432" height="247" fill="none" stroke="#000" />
      <Arrow x={707} y={295} label="C" />
      <Arrow x={746} y={423} label="D" />
      <Arrow x={-1} y={353} label="E" />
    </svg>
  )
}

function StatusBar() {
  return (
    <div className="flex h-[15px] shrink-0 items-center bg-[#4a4a4a] text-[10px] font-medium text-[#ededed]">
      <input aria-label="Zoom level" defaultValue="110.19%" className="ml-[3px] h-full w-[52px] border border-b-0 border-[#5c5c5c] bg-[#434343] pt-px pl-[3px]" />
      <button type="button" aria-label="Zoom presets" className="flex h-full w-[18px] items-center justify-center border-r border-[#5c5c5c] bg-[#434343]">
        <Chevron />
      </button>
      <svg width="26" height="8" viewBox="0 0 26 8" className="ml-[7px]" aria-hidden="true">
        <path d="M1 0h1.500v8H1zM9 0v8L3.500 4zM25 0v8l-5.500-4z" fill="#6e6e6e" />
      </svg>
      <input aria-label="Artboard number" defaultValue="1" className="ml-2 h-full w-[41px] border border-b-0 border-[#5c5c5c] bg-[#434343] pt-px pl-[3px]" />
      <button type="button" aria-label="Artboard list" className="flex h-full w-[18px] items-center justify-center border-r border-[#5c5c5c] bg-[#434343]">
        <Chevron />
      </button>
      <svg width="26" height="8" viewBox="0 0 26 8" className="ml-[7px]" aria-hidden="true">
        <path d="M1 0l5.500 4L1 8zM17 0l5.500 4L17 8zM23 0h1.500v8H23z" fill="#6e6e6e" />
      </svg>
      <span className="ml-2 h-full w-[201px] shrink-0 bg-[#535353] text-center leading-[18px] text-[#cfcfcf]">Selection</span>
      <button type="button" aria-label="Status menu" className="flex h-full w-[17px] items-center justify-center bg-[#535353]">
        <svg width="6" height="8" viewBox="0 0 6 8">
          <path d="M0 0l6 4-6 4z" fill="#cfcfcf" />
        </svg>
      </button>
      <div className="flex flex-1 items-center justify-between px-1">
        <Chevron dir="left" className="text-[#9a9a9a]" />
        <span className="h-[14px] w-[26px] rounded-full bg-[#636363]" />
        <Chevron dir="right" className="text-[#9a9a9a]" />
      </div>
    </div>
  )
}

function DocumentWindow() {
  return (
    <section className="flex min-w-0 flex-1 flex-col border-l border-[#3a3a3a]">
      <Tabs />
      <div className="flex min-h-0 flex-1">
        <div className="flex min-w-0 flex-1 flex-col">
          <main className="min-h-0 flex-1 border-b border-[#3a3a3a]">
            <Artboard />
          </main>
          <StatusBar />
        </div>
        <div className="flex w-4 shrink-0 flex-col bg-[#4a4a4a]">
          <div className="flex flex-1 flex-col items-center justify-between pt-1 pb-[3px]">
            <Chevron dir="up" className="text-[#a4a4a4]" />
            <span className="h-[26px] w-[15px] rounded-full bg-[#636363]" />
            <Chevron className="text-[#a4a4a4]" />
          </div>
          <div className="h-4 bg-[#535353]" />
        </div>
      </div>
    </section>
  )
}

function Dock({ sections }) {
  return (
    <aside className="flex w-10 shrink-0 flex-col border-l border-[#3a3a3a] pl-px">
      <div className="flex flex-1 flex-col border-l border-[#3a3a3a]">
        <button type="button" aria-label="Expand panels" className="flex h-3 items-center justify-end border-b border-[#3a3a3a] bg-[#424242] pr-[5px]">
          <Collapse />
        </button>
        {sections.map((icons) => (
          <div key={icons[0]} className="border-b-2 border-[#3e3e3e] pt-[3px] pb-[2px]">
            <Grip />
            <div className="mt-[2px]">
              {icons.map((name) => (
                <button key={name} type="button" aria-label={name} className="flex h-7 w-full items-center justify-center pl-[2px]">
                  <svg width="20" height="20" viewBox="0 0 20 20">
                    {DI[name]}
                  </svg>
                </button>
              ))}
            </div>
          </div>
        ))}
      </div>
    </aside>
  )
}

export default function App() {
  return (
    <div className="flex h-screen flex-col overflow-hidden border-b border-[#1c1c1c] bg-[#535353] font-['Open_Sans','Noto_Sans',sans-serif]">
      <svg width="0" height="0" className="absolute" aria-hidden="true">
        <linearGradient id="gray-ramp">
          <stop offset="0" stopColor="#222" />
          <stop offset="1" stopColor="#d8d8d8" />
        </linearGradient>
      </svg>
      <MenuBar />
      <ControlBar />
      <div className="flex min-h-0 flex-1">
        <Toolbar />
        <DocumentWindow />
        {DOCKS.map((sections) => (
          <Dock key={sections[0][0]} sections={sections} />
        ))}
      </div>
    </div>
  )
}
